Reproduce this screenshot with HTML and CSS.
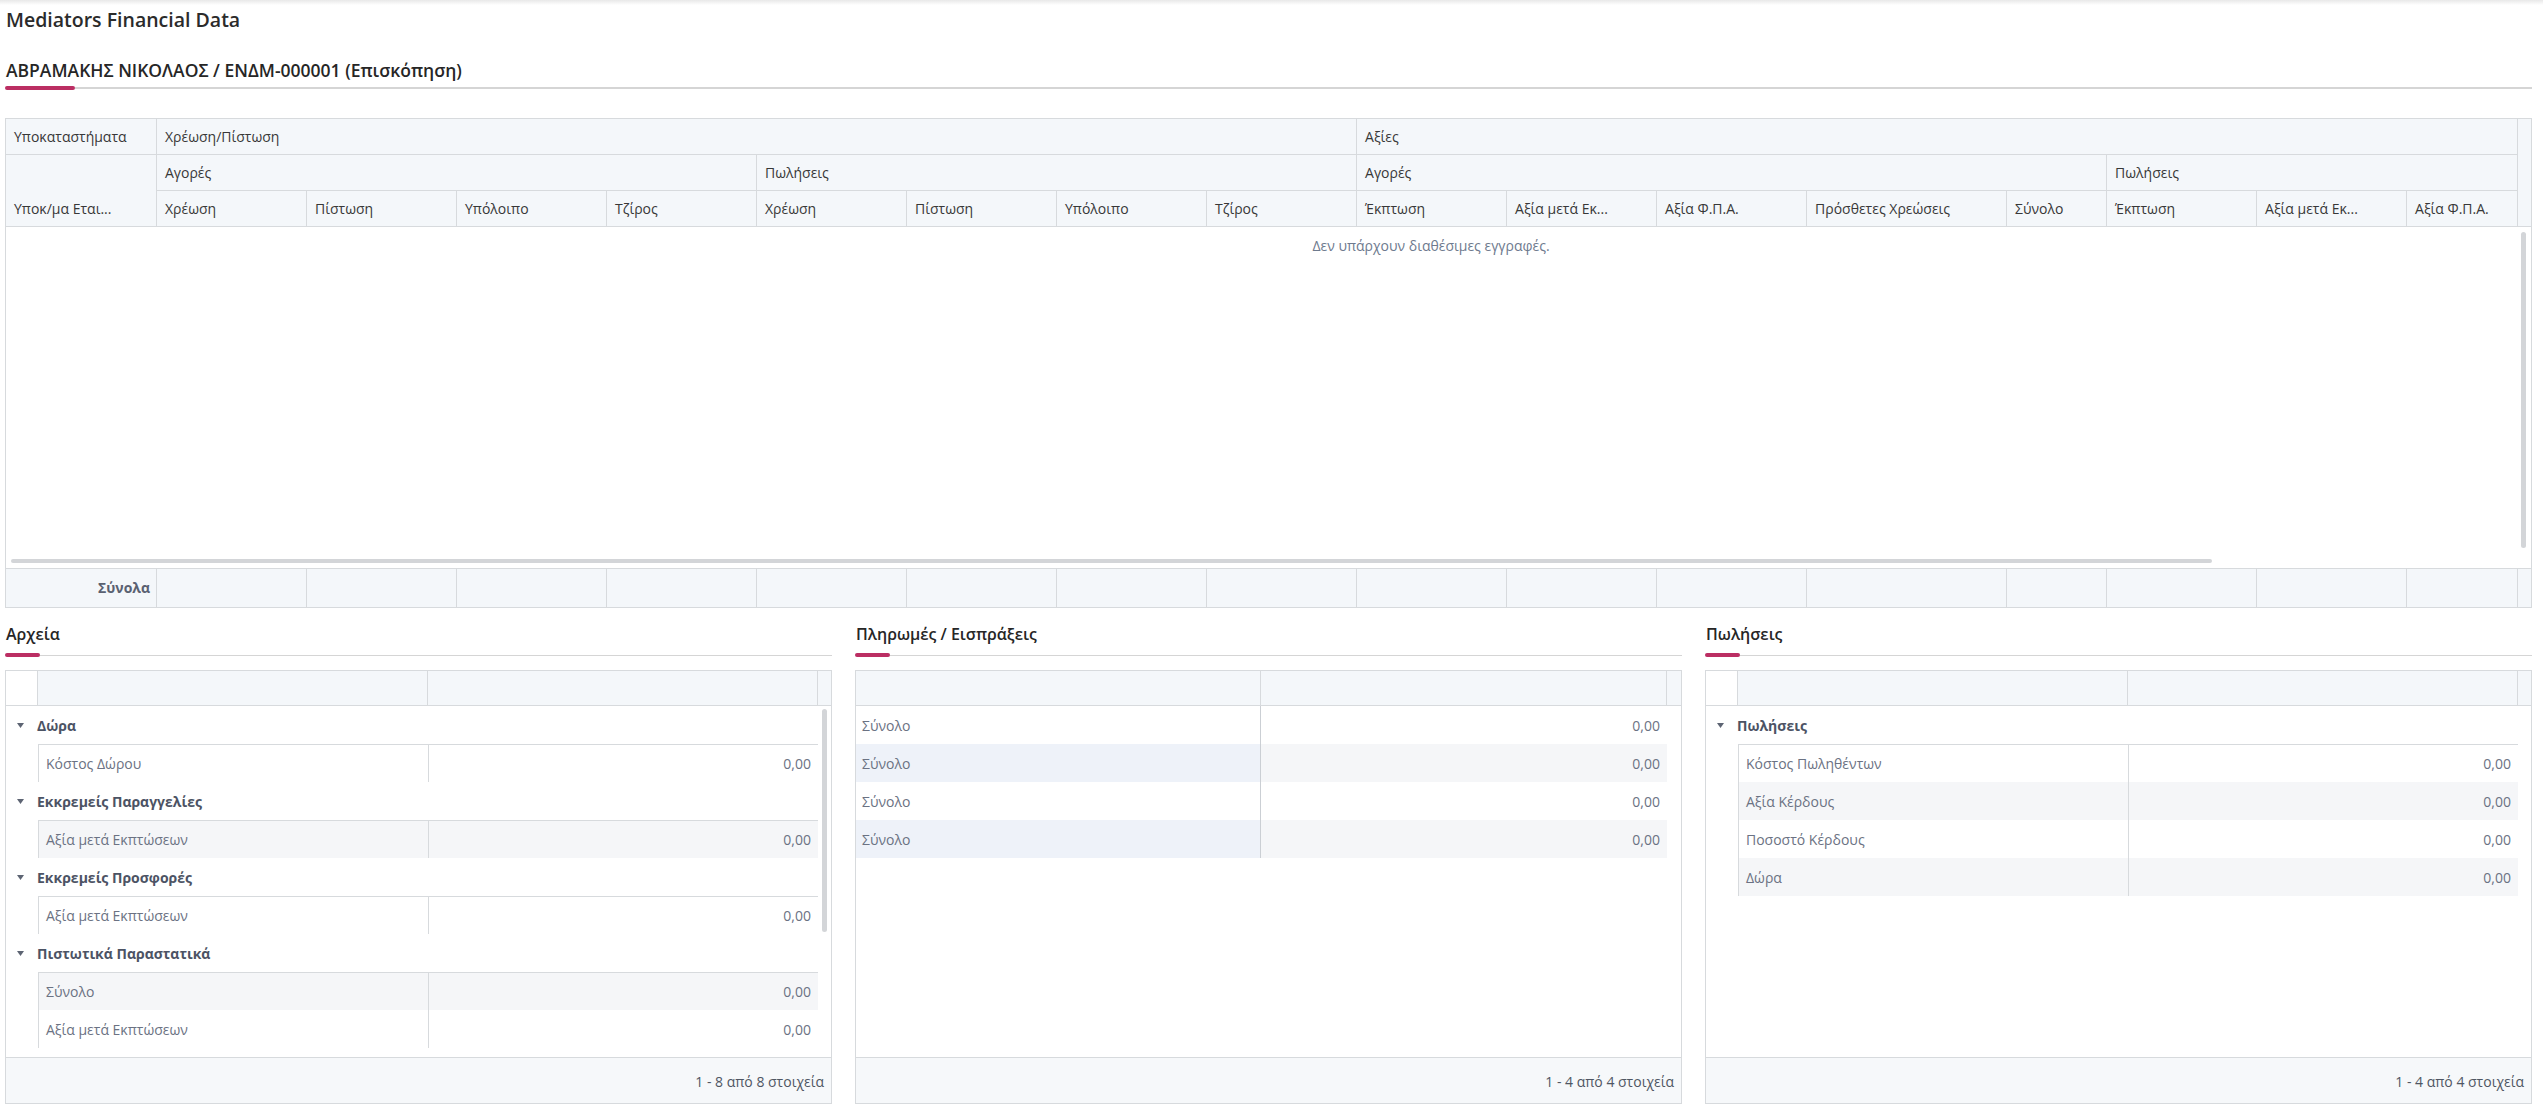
FILE: index.html
```html
<!DOCTYPE html>
<html lang="el">
<head>
<meta charset="utf-8">
<title>Mediators Financial Data</title>
<link rel="stylesheet" href="styles.css">
</head>
<body>
<div class="page">
  <h1 class="page-title">Mediators Financial Data</h1>
  <h2 class="section-title">ΑΒΡΑΜΑΚΗΣ ΝΙΚΟΛΑΟΣ / ΕΝΔΜ-000001 (Επισκόπηση)</h2>
  <div class="uline main"><span class="accent"></span><span class="rest"></span></div>

  <div class="grid main-grid">
    <div class="ghead">
      <div class="gwrap">
        <table class="gt">
          <colgroup>
            <col class="w150"><col class="w150"><col class="w150"><col class="w150"><col class="w150">
            <col class="w150"><col class="w150"><col class="w150"><col class="w150">
            <col class="w150"><col class="w150"><col class="w150"><col class="w200"><col class="w100">
            <col class="w150"><col class="w150"><col class="w150"><col class="w200"><col class="w100">
          </colgroup>
          <thead>
            <tr>
              <th class="first">Υποκαταστήματα</th>
              <th colspan="8">Χρέωση/Πίστωση</th>
              <th colspan="10">Αξίες</th>
            </tr>
            <tr>
              <th class="first bottom" rowspan="2">Υποκ/μα Εται...</th>
              <th colspan="4">Αγορές</th>
              <th colspan="4">Πωλήσεις</th>
              <th colspan="5">Αγορές</th>
              <th colspan="5">Πωλήσεις</th>
            </tr>
            <tr>
              <th>Χρέωση</th><th>Πίστωση</th><th>Υπόλοιπο</th><th>Τζίρος</th>
              <th>Χρέωση</th><th>Πίστωση</th><th>Υπόλοιπο</th><th>Τζίρος</th>
              <th>Έκπτωση</th><th>Αξία μετά Εκ...</th><th>Αξία Φ.Π.Α.</th><th>Πρόσθετες Χρεώσεις</th><th>Σύνολο</th>
              <th>Έκπτωση</th><th>Αξία μετά Εκ...</th><th>Αξία Φ.Π.Α.</th><th>Πρόσθετες Χρεώσεις</th><th>Σύνολο</th>
            </tr>
          </thead>
        </table>
      </div>
      <div class="gutter"></div>
    </div>
    <div class="gcontent">
      <div class="norec">Δεν υπάρχουν διαθέσιμες εγγραφές.</div>
      <div class="thumb vthumb"></div>
      <div class="thumb hthumb"></div>
    </div>
    <div class="gfoot">
      <div class="gwrap">
        <table class="gt">
          <colgroup>
            <col class="w150"><col class="w150"><col class="w150"><col class="w150"><col class="w150">
            <col class="w150"><col class="w150"><col class="w150"><col class="w150">
            <col class="w150"><col class="w150"><col class="w150"><col class="w200"><col class="w100">
            <col class="w150"><col class="w150"><col class="w150"><col class="w200"><col class="w100">
          </colgroup>
          <tbody>
            <tr>
              <td class="first total">Σύνολα</td>
              <td></td><td></td><td></td><td></td><td></td><td></td><td></td><td></td><td></td>
              <td></td><td></td><td></td><td></td><td></td><td></td><td></td><td></td><td></td>
            </tr>
          </tbody>
        </table>
      </div>
      <div class="gutter"></div>
    </div>
  </div>

  <div class="panels">
    <section class="panel">
      <h3 class="ptitle">Αρχεία</h3>
      <div class="uline small"><span class="accent"></span><span class="rest"></span></div>
      <div class="grid pgrid">
        <div class="pg-head tree">
          <div class="hc exp"></div><div class="hc"></div><div class="hc"></div><div class="hc gut"></div>
        </div>
        <div class="pg-body">
          <div class="grp"><svg class="caret" width="7" height="5" viewBox="0 0 7 5"><path d="M0 0H7L3.5 5Z"/></svg><span>Δώρα</span></div>
          <div class="nest">
            <div class="drow"><span class="c1">Κόστος Δώρου</span><span class="c2">0,00</span></div>
          </div>
          <div class="grp"><svg class="caret" width="7" height="5" viewBox="0 0 7 5"><path d="M0 0H7L3.5 5Z"/></svg><span>Εκκρεμείς Παραγγελίες</span></div>
          <div class="nest">
            <div class="drow alt"><span class="c1">Αξία μετά Εκπτώσεων</span><span class="c2">0,00</span></div>
          </div>
          <div class="grp"><svg class="caret" width="7" height="5" viewBox="0 0 7 5"><path d="M0 0H7L3.5 5Z"/></svg><span>Εκκρεμείς Προσφορές</span></div>
          <div class="nest">
            <div class="drow"><span class="c1">Αξία μετά Εκπτώσεων</span><span class="c2">0,00</span></div>
          </div>
          <div class="grp"><svg class="caret" width="7" height="5" viewBox="0 0 7 5"><path d="M0 0H7L3.5 5Z"/></svg><span>Πιστωτικά Παραστατικά</span></div>
          <div class="nest">
            <div class="drow alt"><span class="c1">Σύνολο</span><span class="c2">0,00</span></div>
            <div class="drow"><span class="c1">Αξία μετά Εκπτώσεων</span><span class="c2">0,00</span></div>
          </div>
          <div class="thumb pthumb"></div>
        </div>
        <div class="pg-foot">1 - 8 από 8 στοιχεία</div>
      </div>
    </section>

    <section class="panel">
      <h3 class="ptitle">Πληρωμές / Εισπράξεις</h3>
      <div class="uline small"><span class="accent"></span><span class="rest"></span></div>
      <div class="grid pgrid">
        <div class="pg-head flat">
          <div class="hc"></div><div class="hc"></div><div class="hc gut"></div>
        </div>
        <div class="pg-body">
          <div class="prow"><span class="c1">Σύνολο</span><span class="c2">0,00</span></div>
          <div class="prow alt"><span class="c1">Σύνολο</span><span class="c2">0,00</span></div>
          <div class="prow"><span class="c1">Σύνολο</span><span class="c2">0,00</span></div>
          <div class="prow alt"><span class="c1">Σύνολο</span><span class="c2">0,00</span></div>
        </div>
        <div class="pg-foot">1 - 4 από 4 στοιχεία</div>
      </div>
    </section>

    <section class="panel">
      <h3 class="ptitle">Πωλήσεις</h3>
      <div class="uline small"><span class="accent"></span><span class="rest"></span></div>
      <div class="grid pgrid">
        <div class="pg-head tree">
          <div class="hc exp"></div><div class="hc"></div><div class="hc"></div><div class="hc gut"></div>
        </div>
        <div class="pg-body">
          <div class="grp"><svg class="caret" width="7" height="5" viewBox="0 0 7 5"><path d="M0 0H7L3.5 5Z"/></svg><span>Πωλήσεις</span></div>
          <div class="nest">
            <div class="drow"><span class="c1">Κόστος Πωληθέντων</span><span class="c2">0,00</span></div>
            <div class="drow alt"><span class="c1">Αξία Κέρδους</span><span class="c2">0,00</span></div>
            <div class="drow"><span class="c1">Ποσοστό Κέρδους</span><span class="c2">0,00</span></div>
            <div class="drow alt"><span class="c1">Δώρα</span><span class="c2">0,00</span></div>
          </div>
        </div>
        <div class="pg-foot">1 - 4 από 4 στοιχεία</div>
      </div>
    </section>
  </div>
</div>
</body>
</html>
```

FILE: styles.css
```css
* { box-sizing: border-box; }

html, body { margin: 0; padding: 0; }

body {
  width: 2543px;
  font-family: "Open Sans", "Noto Sans", "DejaVu Sans", sans-serif;
  color: #333;
  background: #fff linear-gradient(#e8e8e8, #ffffff 5px) no-repeat;
}

.page {
  padding: 0 11px 0 5px;
}

.page-title {
  margin: 0;
  padding-left: 1px;
  font-size: 19.5px;
  font-weight: 600;
  line-height: 40px;
  color: #2b2b2b;
}

.section-title {
  margin: 14px 0 0;
  padding-left: 1px;
  font-size: 17.5px;
  font-weight: 600;
  line-height: 32px;
  color: #262626;
}

.uline {
  display: flex;
  align-items: center;
  height: 4px;
}
.uline .accent {
  height: 4px;
  border-radius: 2px;
  background: #bb2e63;
  flex: none;
}
.uline .rest {
  flex: 1;
  background: #d5d5d5;
}
.uline.main .accent { width: 70px; }
.uline.main .rest { height: 2px; }
.uline.small .accent { width: 35px; }
.uline.small .rest { height: 1px; }

/* grids */
.grid {
  border: 1px solid #d7dadd;
  background: #fff;
}

.main-grid {
  margin-top: 28px;
}

.ghead, .gfoot {
  display: flex;
  background: #f4f7fa;
}
.ghead { border-bottom: 1px solid #d7dadd; }
.gfoot { border-top: 1px solid #d7dadd; }

.gwrap {
  flex: 1;
  min-width: 0;
  overflow: hidden;
}
.gutter {
  width: 14px;
  flex: none;
  border-left: 1px solid #d7dadd;
}

.gt {
  border-collapse: separate;
  border-spacing: 0;
  table-layout: fixed;
  width: 2850px;
}
.w150 { width: 150px; }
.w200 { width: 200px; }
.w100 { width: 100px; }

.gt th, .gt td {
  padding: 0 8px;
  font-size: 14px;
  font-weight: 400;
  text-align: left;
  white-space: nowrap;
  color: #383838;
  border-left: 1px solid #d7dadd;
}
.gt th { line-height: 35px; }
.gt td { line-height: 38px; }
.gt tr + tr th { border-top: 1px solid #d7dadd; }
.gt .first { border-left: none; }
.gt th.bottom { vertical-align: bottom; }

.gt td.total {
  text-align: right;
  padding-right: 6px;
  font-weight: 700;
  color: #5a6171;
}

.gcontent {
  position: relative;
  height: 341px;
  overflow: hidden;
}
.norec {
  width: 2850px;
  padding-top: 9px;
  text-align: center;
  font-size: 14px;
  line-height: 20px;
  color: #6e7a8e;
}

.thumb {
  position: absolute;
  background: #d3d5d8;
  border-radius: 3px;
}
.vthumb { right: 5px; top: 5px; width: 5px; height: 316px; }
.hthumb { left: 5px; top: 332px; width: 2201px; height: 4px; }

/* bottom panels */
.panels {
  display: grid;
  grid-template-columns: repeat(3, 827px);
  column-gap: 23px;
  margin-top: 10px;
}

.ptitle {
  margin: 0;
  padding-left: 1px;
  font-size: 16px;
  font-weight: 600;
  line-height: 32px;
  color: #262626;
}
.panel .uline { margin-top: 3px; }
.pgrid { margin-top: 13px; }

.pg-head {
  display: grid;
  height: 35px;
  border-bottom: 1px solid #d7dadd;
}
.pg-head.tree { grid-template-columns: 32px 390px 390px 1fr; }
.pg-head.flat { grid-template-columns: 405px 406px 1fr; }
.hc {
  background: #f4f7fa;
  border-right: 1px solid #d7dadd;
}
.hc.exp { background: #fff; }
.hc.gut { border-right: none; }

.pg-body {
  position: relative;
  height: 351px;
  overflow: hidden;
  font-size: 14px;
  color: #6b7283;
}

.grp {
  display: flex;
  align-items: center;
  height: 38px;
  padding-left: 11px;
  font-weight: 700;
  color: #4c5364;
}
.caret {
  fill: #5d6473;
  margin-right: 13px;
  flex: none;
}

.nest {
  margin-left: 32px;
  width: 780px;
  border-top: 1px solid #d7dadd;
  border-left: 1px solid #d7dadd;
}
.drow {
  display: grid;
  grid-template-columns: 390px 1fr;
  height: 37px;
  align-items: center;
}
.drow + .drow { height: 38px; }
.drow .c1, .prow .c1 {
  height: 100%;
  display: flex;
  align-items: center;
  padding-left: 7px;
  border-right: 1px solid #d7dadd;
}
.drow .c2, .prow .c2 {
  text-align: right;
  padding-right: 7px;
}
.drow.alt { background: #f5f6f8; }

.prow {
  display: grid;
  grid-template-columns: 405px 406px;
  height: 38px;
  align-items: center;
}
.prow .c1 {
  padding-left: 6px;
  border-right-color: #cbcfd4;
}
.prow .c2 { height: 100%; display: flex; align-items: center; justify-content: flex-end; }
.prow.alt .c1 { background: #eef2f9; }
.prow.alt .c2 { background: #f5f6f8; }

.pthumb { left: 816px; top: 3px; width: 5px; height: 223px; }

.pg-foot {
  height: 46px;
  border-top: 1px solid #d7dadd;
  background: #f6f8fa;
  padding: 4px 7px 0 0;
  line-height: 40px;
  text-align: right;
  font-size: 14px;
  color: #4f5663;
}
```
